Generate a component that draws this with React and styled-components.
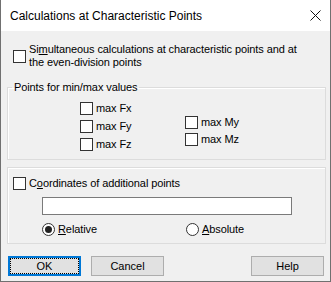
import React from 'react';
import styled, { createGlobalStyle } from 'styled-components';

const GlobalStyle = createGlobalStyle`
  html, body {
    margin: 0;
    padding: 0;
    background: #f0f0f0;
  }
  body {
    font-family: "Liberation Sans", Arial, sans-serif;
    font-size: 11px;
    letter-spacing: -0.1px;
    color: #000;
  }
`;

const Window = styled.div`
  width: 331px;
  height: 282px;
  box-sizing: border-box;
  border: 1px solid #707070;
  border-top: none;
  background: #f0f0f0;
  display: flex;
  flex-direction: column;
`;

const TitleBar = styled.div`
  height: 31px;
  flex: none;
  background: #fff;
  display: flex;
  align-items: center;
  padding: 0 9px 0 9px;
  font-size: 12px;
  letter-spacing: 0;
`;

const Title = styled.span`
  flex: 1;
`;

const Body = styled.div`
  flex: 1;
  display: flex;
  flex-direction: column;
  padding: 0 4px 0 6px;
`;

const Box = styled.span`
  flex: none;
  width: 13px;
  height: 13px;
  box-sizing: border-box;
  border: 1px solid #333;
  background: #fff;
  border-radius: ${(p) => (p.$round ? '50%' : '0')};
  display: flex;
  align-items: center;
  justify-content: center;

  &::after {
    content: '';
    display: ${(p) => (p.$checked ? 'block' : 'none')};
    width: 7px;
    height: 7px;
    border-radius: 50%;
    background: #222;
  }
`;

const Option = styled.label`
  display: flex;
  align-items: center;
  gap: 3px;
  height: ${(p) => p.$h || 18}px;
  line-height: 13px;
  width: ${(p) => (p.$w ? `${p.$w}px` : 'auto')};
`;

const TopOption = styled(Option)`
  height: auto;
  margin: 12px 0 0 6px;
`;

const Key = styled.u`
  text-decoration: underline;
  text-underline-offset: 1px;
`;

const Group = styled.fieldset`
  margin: ${(p) => p.$mt}px 0 0 0;
  min-width: 0;
  border: 1px solid #dcdcdc;
  box-shadow: inset 1px 1px 0 #fff;
  padding: ${(p) => p.$pad};
`;

const Legend = styled.legend`
  margin-left: 4px;
  padding: 0 2px;
  line-height: 13px;
`;

const MinMax = styled.div`
  display: flex;
  padding-left: 72px;
`;

const Column = styled.div`
  display: flex;
  flex-direction: column;
  width: ${(p) => p.$w || 'auto'};
  margin-top: ${(p) => p.$mt || 0}px;
`;

const Field = styled.input`
  display: block;
  box-sizing: border-box;
  margin: 5px 0 0 29px;
  width: 250px;
  height: 18px;
  border: 1px solid #7a7a7a;
  background: #fff;
  padding: 0 3px;
  font: inherit;
  outline: none;
`;

const RadioRow = styled.div`
  display: flex;
  margin: 5px 0 0 29px;
`;

const Buttons = styled.div`
  display: flex;
  margin-top: 12px;
  padding: 0 2px 0 1px;
`;

const Button = styled.button`
  position: relative;
  width: 73px;
  height: 20px;
  box-sizing: border-box;
  margin-left: ${(p) => p.$ml || '0'};
  border: 1px solid ${(p) => (p.$default ? '#0078d7' : '#adadad')};
  box-shadow: ${(p) => (p.$default ? 'inset 0 0 0 1px #0078d7' : 'none')};
  background: #e1e1e1;
  font: inherit;
  color: #000;
  padding: 0;

  &::after {
    content: '';
    display: ${(p) => (p.$default ? 'block' : 'none')};
    position: absolute;
    inset: 1px;
    border: 1px dotted #000;
  }
`;

const CloseIcon = () => (
  <svg width="11" height="11" viewBox="0 0 11 11">
    <path d="M0.5 0.5 L10.5 10.5 M10.5 0.5 L0.5 10.5" stroke="#111" strokeWidth="1" fill="none" />
  </svg>
);

export default function App() {
  return (
    <>
      <GlobalStyle />
      <Window>
        <TitleBar>
          <Title>Calculations at Characteristic Points</Title>
          <CloseIcon />
        </TitleBar>
        <Body>
          <TopOption>
            <Box />
            <span>
              Si<Key>m</Key>ultaneous calculations at characteristic points and at
              <br />
              the even-division points
            </span>
          </TopOption>

          <Group $mt={12} $pad="5px 0 6px 0">
            <Legend>Points for min/max values</Legend>
            <MinMax>
              <Column $w="105px">
                <Option><Box /><span>max Fx</span></Option>
                <Option><Box /><span>max Fy</span></Option>
                <Option><Box /><span>max Fz</span></Option>
              </Column>
              <Column $mt={15}>
                <Option $h={17}><Box /><span>max My</span></Option>
                <Option $h={17}><Box /><span>max Mz</span></Option>
              </Column>
            </MinMax>
          </Group>

          <Group $mt={7} $pad="6px 0 5px 5px">
            <Option><Box /><span>C<Key>o</Key>ordinates of additional points</span></Option>
            <Field type="text" defaultValue="" />
            <RadioRow>
              <Option $w={144}><Box $round $checked /><span><Key>R</Key>elative</span></Option>
              <Option><Box $round /><span><Key>A</Key>bsolute</span></Option>
            </RadioRow>
          </Group>

          <Buttons>
            <Button $default>OK</Button>
            <Button $ml="10px">Cancel</Button>
            <Button $ml="auto">Help</Button>
          </Buttons>
        </Body>
      </Window>
    </>
  );
}
